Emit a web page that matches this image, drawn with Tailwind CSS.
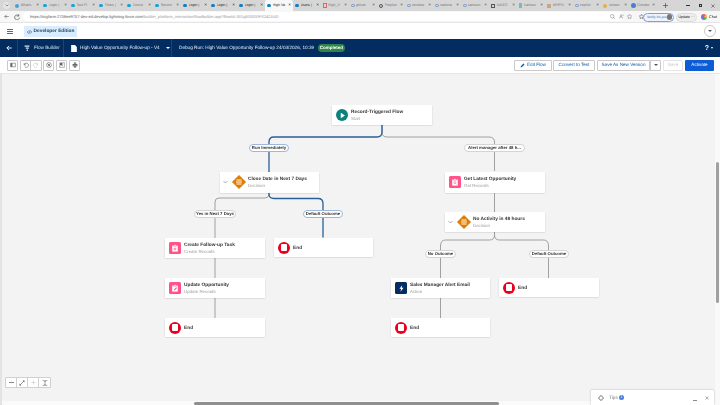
<!DOCTYPE html>
<html><head><meta charset="utf-8">
<script src="https://cdn.jsdelivr.net/npm/@tailwindcss/browser@4"></script>
</head>
<body class="w-[720px] h-[405px] overflow-hidden bg-white font-['Liberation_Sans',sans-serif] text-[#181818] [text-rendering:geometricPrecision]">
<div class="flex flex-col h-[405px] blur-[0.3px] whitespace-nowrap">
  <!-- tab strip -->
  <div class="h-[11px] bg-[#d6d6d6] flex items-center text-[3.6px] text-[#777] shrink-0">
    <div class="w-[13px] flex justify-center"><div class="w-[7px] h-[7px] rounded-full bg-[#e4e4e4] flex items-center justify-center"><svg width="4" height="3" viewBox="0 0 8 6"><path d="M1 1l3 3 3-3" fill="none" stroke="#555" stroke-width="1.200"/></svg></div></div>
    <div class="flex items-center gap-[1.500px] w-[28px] px-[2px]"><span class="w-[4px] h-[4px] rounded-full bg-[#4aa3d8] shrink-0"></span><span class="flex-1 overflow-hidden">What's</span><span class="text-[#444] text-[4.500px]">×</span></div>
    <div class="flex items-center gap-[1.500px] w-[28px] px-[2px]"><span class="w-[4px] h-[2.500px] rounded-full bg-[#17a0db] shrink-0"></span><span class="flex-1 overflow-hidden">Login |</span><span class="text-[#444] text-[4.500px]">×</span></div>
    <div class="flex items-center gap-[1.500px] w-[28px] px-[2px]"><span class="w-[4px] h-[2.500px] rounded-full bg-[#17a0db] shrink-0"></span><span class="flex-1 overflow-hidden">Test Fl</span><span class="text-[#444] text-[4.500px]">×</span></div>
    <div class="flex items-center gap-[1.500px] w-[28px] px-[2px]"><span class="w-[4px] h-[2.500px] rounded-full bg-[#17a0db] shrink-0"></span><span class="flex-1 overflow-hidden">Flows |</span><span class="text-[#444] text-[4.500px]">×</span></div>
    <div class="flex items-center gap-[1.500px] w-[28px] px-[2px]"><span class="w-[4px] h-[2.500px] rounded-full bg-[#17a0db] shrink-0"></span><span class="flex-1 overflow-hidden">Conne</span><span class="text-[#444] text-[4.500px]">×</span></div>
    <div class="flex items-center gap-[1.500px] w-[28px] px-[2px]"><span class="w-[4px] h-[2.500px] rounded-full bg-[#17a0db] shrink-0"></span><span class="flex-1 overflow-hidden">Recent</span><span class="text-[#444] text-[4.500px]">×</span></div>
    <div class="flex items-center gap-[1.500px] w-[28px] px-[2px] text-[#222]"><span class="w-[4px] h-[2.500px] rounded-full bg-[#0b7fc4] shrink-0"></span><span class="flex-1 overflow-hidden">Login |</span><span class="text-[4.500px]">×</span></div>
    <div class="flex items-center gap-[1.500px] w-[28px] px-[2px] text-[#222]"><span class="w-[4px] h-[2.500px] rounded-full bg-[#0b7fc4] shrink-0"></span><span class="flex-1 overflow-hidden">Login |</span><span class="text-[4.500px]">×</span></div>
    <div class="flex items-center gap-[1.500px] w-[28px] px-[2px] text-[#222]"><span class="w-[4px] h-[2.500px] rounded-full bg-[#0b7fc4] shrink-0"></span><span class="flex-1 overflow-hidden">Login |</span><span class="text-[4.500px]">×</span></div>
    <div class="flex items-center gap-[1.500px] w-[28px] px-[2px] h-full bg-[#f7f7f7] rounded-t-[2px] text-[#222]"><span class="w-[4px] h-[2.500px] rounded-full bg-[#0b7fc4] shrink-0"></span><span class="flex-1 overflow-hidden">High Va</span><span class="text-[4.500px]">×</span></div>
    <div class="flex items-center gap-[1.500px] w-[28px] px-[2px] text-[#222]"><span class="w-[4px] h-[2.500px] rounded-full bg-[#0b7fc4] shrink-0"></span><span class="flex-1 overflow-hidden">Users |</span><span class="text-[4.500px]">×</span></div>
    <div class="flex items-center gap-[1.500px] w-[28px] px-[2px]"><span class="w-[3.500px] h-[4.500px] border-[0.5px] border-[#d66] bg-[#f3cccc] shrink-0"></span><span class="flex-1 overflow-hidden">High_V</span><span class="text-[#444] text-[4.500px]">×</span></div>
    <div class="flex items-center gap-[1.500px] w-[28px] px-[2px]"><span class="w-[3.500px] h-[3.500px] rounded-full border-[0.5px] border-[#6a94c9] shrink-0"></span><span class="flex-1 overflow-hidden">github</span><span class="text-[#444] text-[4.500px]">×</span></div>
    <div class="flex items-center gap-[1.500px] w-[28px] px-[2px]"><span class="w-[4px] h-[4px] rounded-full border-[0.7px] border-[#555] shrink-0"></span><span class="flex-1 overflow-hidden">Perplex</span><span class="text-[#444] text-[4.500px]">×</span></div>
    <div class="flex items-center gap-[1.500px] w-[28px] px-[2px]"><span class="w-[3.500px] h-[3.500px] rounded-full border-[0.5px] border-[#6a94c9] shrink-0"></span><span class="flex-1 overflow-hidden">window</span><span class="text-[#444] text-[4.500px]">×</span></div>
    <div class="flex items-center gap-[1.500px] w-[28px] px-[2px]"><span class="w-[3.500px] h-[3.500px] rounded-full border-[0.5px] border-[#6a94c9] shrink-0"></span><span class="flex-1 overflow-hidden">nationa</span><span class="text-[#444] text-[4.500px]">×</span></div>
    <div class="flex items-center gap-[1.500px] w-[28px] px-[2px]"><span class="w-[3.500px] h-[3.500px] rounded-full border-[0.5px] border-[#6a94c9] shrink-0"></span><span class="flex-1 overflow-hidden">samsun</span><span class="text-[#444] text-[4.500px]">×</span></div>
    <div class="flex items-center gap-[1.500px] w-[28px] px-[2px]"><span class="w-[4px] h-[4px] border-[0.7px] border-[#555] shrink-0"></span><span class="flex-1 overflow-hidden">AA/ATI</span><span class="text-[#444] text-[4.500px]">×</span></div>
    <div class="flex items-center gap-[1.500px] w-[28px] px-[2px]"><span class="w-[3px] h-[5px] bg-[#7bb] shrink-0"></span><span class="flex-1 overflow-hidden">Samsur</span><span class="text-[#444] text-[4.500px]">×</span></div>
    <div class="flex items-center gap-[1.500px] w-[28px] px-[2px]"><span class="w-[4px] h-[4px] bg-[#c9a77a] shrink-0"></span><span class="flex-1 overflow-hidden">WHPO</span><span class="text-[#444] text-[4.500px]">×</span></div>
    <div class="flex items-center gap-[1.500px] w-[28px] px-[2px]"><span class="w-[3.500px] h-[3.500px] rounded-full border-[0.5px] border-[#6a94c9] shrink-0"></span><span class="flex-1 overflow-hidden">copilot</span><span class="text-[#444] text-[4.500px]">×</span></div>
    <div class="flex items-center gap-[1.500px] w-[28px] px-[2px]"><span class="w-[4px] h-[4px] rounded-full bg-[#e6b04c] shrink-0"></span><span class="flex-1 overflow-hidden">romani</span><span class="text-[#444] text-[4.500px]">×</span></div>
    <div class="flex items-center gap-[1.500px] w-[28px] px-[2px]"><span class="w-[4.500px] h-[4.500px] rounded-full bg-[#4a7fd0] shrink-0"></span><span class="flex-1 overflow-hidden">Climate</span><span class="text-[#444] text-[4.500px]">×</span></div>
    <svg class="ml-[6px]" width="5" height="5" viewBox="0 0 10 10"><path d="M5 0v10M0 5h10" stroke="#444" stroke-width="1.300"/></svg>
    <div class="ml-auto flex items-center gap-[9px] pr-[5px] text-[#333]">
      <span class="w-[3.500px] h-[0.7px] bg-[#333]"></span><span class="w-[3.500px] h-[3.500px] border-[0.7px] border-[#333]"></span><svg width="4" height="4" viewBox="0 0 10 10"><path d="M1 1l8 8M9 1l-8 8" stroke="#333" stroke-width="1.300"/></svg>
    </div>
  </div>
  <!-- address bar -->
  <div class="h-[12px] bg-[#f7f7f7] flex items-center shrink-0 text-[4px] border-b-[0.5px] border-[#e5e5e5]">
    <svg class="ml-[4px]" width="5" height="5" viewBox="0 0 10 10"><path d="M9.500 5H1.500M5 1.500 1.500 5 5 8.500" fill="none" stroke="#666" stroke-width="1.300"/></svg>
    <svg class="ml-[5px]" width="6" height="6" viewBox="0 0 10 10"><path d="M8 3A4 4 0 1 0 9 6" fill="none" stroke="#555" stroke-width="1.200"/><path d="M8 0v3.500H4.500" fill="none" stroke="#555" stroke-width="1"/></svg>
    <div class="ml-[3px] w-[600px] bg-white rounded-full h-[9px] flex items-center pl-[7px] pt-[0.5px] text-[#999]">
      <span class="text-[#555]">https://orgfarm-2708ee9757-dev-ed.develop.lightning.force.com</span><span>/builder_platform_interaction/flowBuilder.app?flowId=301g500000FX242AAD</span>
    </div>
    <div class="absolute left-[610px] top-[14px] flex items-center gap-[3.500px]">
      <svg width="5" height="5" viewBox="0 0 10 10"><circle cx="4.500" cy="4.500" r="3.500" fill="none" stroke="#777"/><path d="M7 7l3 3" stroke="#777"/></svg>
      <svg width="5" height="5" viewBox="0 0 10 10"><path d="M1 9 4 1l3 8M2 6h4M8 1v3" fill="none" stroke="#777"/></svg>
      <svg width="5" height="5" viewBox="0 0 10 10"><path d="M5 .5l1.400 3 3.200.4-2.400 2.200.7 3.300L5 7.800 2.100 9.400l.7-3.300L.4 3.900l3.200-.4z" fill="none" stroke="#777" stroke-width=".9"/></svg>
      <svg class="ml-[3px]" width="5" height="5" viewBox="0 0 10 10"><path d="M5 .5l1.400 3 3.200.4-2.400 2.200.7 3.300L5 7.800 2.100 9.400l.7-3.300L.4 3.900l3.200-.4z" fill="none" stroke="#555" stroke-width="1"/></svg>
    </div>
    <div class="absolute left-[643px] top-[12.500px] w-[31px] h-[9px] pl-[3px] pt-[0.5px] rounded-full border-[0.7px] border-[#7d9fe0] bg-[#eef3fd] text-[#3a62b0] flex items-center justify-between pr-[1px] text-[3.400px]">Verify it's you<span class="w-[5px] h-[6px] rounded-full bg-[#777]"></span></div>
    <div class="absolute left-[676px] top-[12.500px] w-[21px] h-[9px] pt-[0.5px] rounded-full bg-[#eeeeee] border-[0.5px] border-[#ddd] flex items-center justify-center text-[3.600px]">Update ⋯</div>
    <span class="absolute left-[701px] top-[14px] w-[6px] h-[6px] rounded-full bg-[conic-gradient(#e55,#fb3,#4b6,#48e,#a5d,#e55)]"></span>
    <span class="absolute left-[709px] top-[15px] text-[3.800px] leading-[5px]">Chat</span>
  </div>
  <!-- org header -->
  <div class="h-[16px] bg-white flex items-center shrink-0 relative">
    <div class="ml-[7px] w-[6px] flex flex-col gap-[1px]"><span class="h-[1px] bg-[#3f6fa8]"></span><span class="h-[1px] bg-[#3f6fa8]"></span><span class="h-[1px] bg-[#3f6fa8]"></span></div>
    <div class="ml-[11px] w-[53px] h-[11px] pt-[1px] bg-[#d8edff] flex items-center justify-center gap-[2px] text-[4.800px] font-bold text-[#2b3f55]"><svg width="5" height="4" viewBox="0 0 10 8"><path d="M3 1 .7 4 3 7M7 1l2.300 3L7 7M6 .5 4 7.500" fill="none" stroke="#333" stroke-width="1"/></svg>Developer Edition</div>
    <div class="ml-auto mr-[4px] w-[12px] h-[12px] rounded-full border-[0.7px] border-[#c9c9c9] flex items-center justify-center"><span class="w-0 h-0 border-x-[2px] border-x-transparent border-t-[2.500px] border-t-[#555]"></span></div>
  </div>
  <!-- navy bar -->
  <div class="h-[18px] bg-[#032d60] flex items-center text-white text-[4.700px] shrink-0">
    <div class="w-[18px] h-full flex items-center justify-center border-r-[0.5px] border-[#1b4577]">
      <svg width="6" height="6" viewBox="0 0 10 10"><path d="M9.500 5H1.500M5 1.500 1.500 5 5 8.500" fill="none" stroke="#fff" stroke-width="1.500"/></svg>
    </div>
    <div class="w-[46px] h-full flex items-center pl-[6px] gap-[4px] border-r-[0.5px] border-[#1b4577]">
      <svg width="6" height="6" viewBox="0 0 10 10"><path d="M1 1h8v2H1zM3 4.300h5v1.800H3zM4.500 7.400h2V10h-2z" fill="#dbe6f3"/></svg>
      <span class="text-[#dbe6f3]">Flow Builder</span>
    </div>
    <div class="w-[108px] h-full flex items-center pl-[7px] border-r-[0.5px] border-[#1b4577]">
      <svg class="shrink-0" width="6" height="7" viewBox="0 0 9 11"><path d="M0 0h6l3 3v8H0z" fill="#fff"/></svg>
      <span class="ml-[3px] text-[#e8eff7]">High Value Opportunity Follow-up - V4</span>
      <span class="ml-[6px] w-0 h-0 border-x-[2px] border-x-transparent border-t-[2.500px] border-t-white"></span>
    </div>
    <div class="pl-[7px] text-[#e8eff7]">Debug Run: High Value Opportunity Follow-up 24/03/2026, 10:39</div>
    <div class="absolute left-[318px] top-[44px] h-[8px] w-[27px] pt-[0.5px] rounded-full bg-[#2e844a] flex items-center justify-center font-bold text-[4.500px]">Completed</div>
    <div class="ml-auto mr-[7px] flex items-center gap-[2px]"><span class="text-[7px] font-bold leading-none">?</span><span class="w-0 h-0 border-x-[1.500px] border-x-transparent border-t-[2px] border-t-white"></span></div>
  </div>
  <!-- toolbar -->
  <div class="h-[17px] bg-white flex items-center shrink-0 border-b border-[#e5e5e5] relative">
    <div class="ml-[7px] w-[11px] h-[11px] rounded-[1px] border-[0.5px] border-[#c9c9c9] flex items-center justify-center">
      <svg width="6" height="6" viewBox="0 0 10 10"><path d="M1 2h8v6H1z" fill="none" stroke="#666"/><path d="M1 2h3v6H1z" fill="#666"/></svg>
    </div>
    <div class="ml-[2px] flex rounded-[1px] border-[0.5px] border-[#c9c9c9] h-[11px] w-[22px]">
      <div class="w-[11px] flex items-center justify-center border-r-[0.5px] border-[#c9c9c9]"><svg width="6" height="6" viewBox="0 0 10 10"><path d="M2 2v3h3M2 5a3.600 3.600 0 1 1 1 3" fill="none" stroke="#666" stroke-width="1"/></svg></div>
      <div class="w-[11px] flex items-center justify-center"><svg width="6" height="6" viewBox="0 0 10 10"><path d="M8 2v3H5M8 5a3.600 3.600 0 1 0-1 3" fill="none" stroke="#c9c9c9" stroke-width="1"/></svg></div>
    </div>
    <div class="ml-[1px] w-[11px] h-[11px] rounded-[1px] border-[0.5px] border-[#c9c9c9] flex items-center justify-center"><svg width="6" height="6" viewBox="0 0 10 10"><circle cx="5" cy="5" r="4" fill="none" stroke="#666" stroke-width="1"/><path d="M2.500 2.500l5 5" stroke="#666"/><circle cx="5" cy="5" r="1.600" fill="#666"/></svg></div>
    <div class="ml-[2px] w-[11px] h-[11px] rounded-[1px] border-[0.5px] border-[#c9c9c9] flex items-center justify-center"><svg width="6" height="6" viewBox="0 0 10 10"><path d="M1 1h4v4H1z" fill="#666"/><path d="M6 1h3v8H1V6h5z" fill="none" stroke="#666" stroke-width=".8"/></svg></div>
    <div class="ml-[2px] w-[11px] h-[11px] rounded-[1px] border-[0.5px] border-[#c9c9c9] flex items-center justify-center"><svg width="6" height="6" viewBox="0 0 10 10"><path d="M3 1h4v2H3zM1 3.500h8V7H7.500V5.500h-5V7H1zM3 6h4v3H3z" fill="#666"/></svg></div>
    <div class="ml-auto mr-[6px] flex items-center text-[4.600px]">
      <div class="w-[38px] h-[11px] pt-[0.5px] rounded-[1px] border-[0.5px] border-[#c9c9c9] flex items-center justify-center gap-[2px] text-[#0b5cab]"><svg width="5" height="5" viewBox="0 0 10 10"><path d="M1 9l1-3 5-5 2 2-5 5z" fill="#0b5cab"/></svg>Edit Flow</div>
      <div class="ml-[1px] w-[42px] h-[11px] pt-[0.5px] rounded-[1px] border-[0.5px] border-[#c9c9c9] flex items-center justify-center text-[#0b5cab]">Convert to Test</div>
      <div class="ml-[2px] w-[53px] h-[11px] pt-[0.5px] rounded-l-[1px] border-[0.5px] border-[#c9c9c9] flex items-center justify-center text-[#0b5cab]">Save As New Version</div>
      <div class="w-[11px] h-[11px] rounded-r-[1px] border-[0.5px] border-[#c9c9c9] flex items-center justify-center"><span class="w-0 h-0 border-x-[2px] border-x-transparent border-t-[2.500px] border-t-[#555]"></span></div>
      <div class="ml-[2px] w-[20px] h-[11px] pt-[0.5px] rounded-[1px] border-[0.5px] border-[#e5e5e5] flex items-center justify-center text-[#c9c9c9]">Save</div>
      <div class="ml-[2px] w-[29px] h-[11px] pt-[0.5px] rounded-[1px] bg-[#0b5cd5] flex items-center justify-center text-white">Activate</div>
    </div>
  </div>
  <!-- canvas -->
  <div class="relative flex-1 bg-[#f3f3f3] overflow-hidden border-l-[2px] border-[#e3e3e3]">
    <svg class="absolute left-[-2px] top-[-74px]" width="720" height="405" fill="none" stroke-width="1">
      <g stroke="#a0a0a0">
        <path d="M382 125v7q0 5 5 5h102q5.500 0 5.500 5v29"/>
        <path d="M269 192v2q0 4-4 4h-46q-4 0-4 4v36"/>
        <path d="M215 258v20M215 298v20"/>
        <path d="M494.500 192v20M494.500 232v3q0 5-5 5h-44q-5 0-5 6v32"/>
        <path d="M494.500 232v3q0 5 5 5h44q5 0 5 6v32"/>
        <path d="M440.500 298v20"/>
      </g>
      <g stroke="#2a6099" stroke-width="1.300">
        <path d="M382 125v7q0 5-5 5h-103q-5 0-5 5v30"/>
        <path d="M269 192v2q0 4.500 5 4.500h44q5 0 5 5v34"/>
      </g>
    </svg>
    <!-- labels -->
    <div class="absolute left-[247px] top-[70px] w-[40px] h-[8px] pt-[0.5px] rounded-full bg-white border-[0.5px] border-[#9db8d8] flex items-center justify-center text-[4.300px] font-bold text-[#333]">Run Immediately</div>
    <div class="absolute left-[462px] top-[70px] w-[61px] h-[8px] pt-[0.5px] rounded-full bg-white border-[0.5px] border-[#d4d4d4] flex items-center justify-center text-[4.300px] font-bold text-[#333]">Alert manager after 48 h...</div>
    <div class="absolute left-[192px] top-[136px] w-[42px] h-[8px] pt-[0.5px] rounded-full bg-white border-[0.5px] border-[#d4d4d4] flex items-center justify-center text-[4.300px] font-bold text-[#333]">Yes in Next 7 Days</div>
    <div class="absolute left-[301px] top-[136px] w-[40px] h-[8px] pt-[0.5px] rounded-full bg-white border-[0.5px] border-[#9db8d8] flex items-center justify-center text-[4.300px] font-bold text-[#333]">Default Outcome</div>
    <div class="absolute left-[423px] top-[176px] w-[31px] h-[8px] pt-[0.5px] rounded-full bg-white border-[0.5px] border-[#d4d4d4] flex items-center justify-center text-[4.300px] font-bold text-[#333]">No Outcome</div>
    <div class="absolute left-[527px] top-[176px] w-[40px] h-[8px] pt-[0.5px] rounded-full bg-white border-[0.5px] border-[#d4d4d4] flex items-center justify-center text-[4.300px] font-bold text-[#333]">Default Outcome</div>

    <!-- Record-Triggered -->
    <div class="absolute left-[330px] top-[31px] w-[100px] h-[20px] bg-white shadow-[0_0.5px_1.500px_rgba(0,0,0,0.2)] flex items-center pl-[4px]">
      <div class="w-[12px] h-[12px] rounded-full bg-[#0b827c] flex items-center justify-center"><svg width="7" height="7" viewBox="0 0 10 10"><path d="M2.500 1 8.500 5 2.500 9z" fill="#fff"/></svg></div>
      <div class="ml-[3px] pt-[1.500px] leading-[6.200px]"><div class="text-[4.800px] font-bold text-[#333]">Record-Triggered Flow</div><div class="text-[4.400px] text-[#999]">Start</div></div>
    </div>
    <!-- Close date -->
    <div class="absolute left-[218px] top-[97.500px] w-[99px] h-[21px] bg-white shadow-[0_0.5px_1.500px_rgba(0,0,0,0.2)] flex items-center pl-[3px]">
      <svg width="5" height="4" viewBox="0 0 10 8"><path d="M1 2l4 4 4-4" fill="none" stroke="#777" stroke-width="1.200"/></svg>
      <svg class="ml-[4px]" width="14" height="14" viewBox="0 0 14 14"><path d="M7 .5 13.500 7 7 13.500 .5 7z" fill="#dd7a01" stroke="#dd7a01" stroke-linejoin="round"/><path d="M4.500 5h5M4 7h6M4.500 9h5" stroke="#fff" stroke-width="1"/></svg>
      <div class="ml-[2px] pt-[1.500px] leading-[6.200px]"><div class="text-[4.800px] font-bold text-[#333]">Close Date in Next 7 Days</div><div class="text-[4.400px] text-[#999]">Decision</div></div>
    </div>
    <!-- Create follow up -->
    <div class="absolute left-[163px] top-[164px] w-[100px] h-[20px] bg-white shadow-[0_0.5px_1.500px_rgba(0,0,0,0.2)] flex items-center pl-[4px]">
      <div class="w-[12px] h-[12px] rounded-[1.500px] bg-[#ff538a] flex items-center justify-center"><svg width="8" height="8" viewBox="0 0 10 10"><path d="M1.500 2h7v7.500h-7z" fill="#fff"/><path d="M3.500 1h3v2h-3z" fill="#fff" stroke="#ff538a" stroke-width=".5"/><path d="M5 4.500v3.500M3.300 6.200h3.400" stroke="#ff538a" stroke-width=".9"/></svg></div>
      <div class="ml-[3px] pt-[1.500px] leading-[6.200px]"><div class="text-[4.800px] font-bold text-[#333]">Create Follow-up Task</div><div class="text-[4.400px] text-[#999]">Create Records</div></div>
    </div>
    <!-- End -->
    <div class="absolute left-[272px] top-[164px] w-[99px] h-[19px] bg-white shadow-[0_0.5px_1.500px_rgba(0,0,0,0.2)] flex items-center pl-[4px]">
      <div class="w-[12px] h-[12px] rounded-full bg-[#ea001e] flex items-center justify-center"><span class="w-[6.500px] h-[6.500px] rounded-[1px] bg-white"></span></div>
      <div class="ml-[3px] pt-[1.500px] text-[4.800px] font-bold text-[#333]">End</div>
    </div>
    <!-- Update -->
    <div class="absolute left-[163px] top-[204px] w-[100px] h-[20px] bg-white shadow-[0_0.5px_1.500px_rgba(0,0,0,0.2)] flex items-center pl-[4px]">
      <div class="w-[12px] h-[12px] rounded-[1.500px] bg-[#ff538a] flex items-center justify-center"><svg width="8" height="8" viewBox="0 0 10 10"><path d="M1.500 2h7v7.500h-7z" fill="#fff"/><path d="M3.500 1h3v2h-3z" fill="#fff" stroke="#ff538a" stroke-width=".5"/><path d="M3.500 8 4 6.500 6.500 4l1 1L5 7.500z" fill="#ff538a"/></svg></div>
      <div class="ml-[3px] pt-[1.500px] leading-[6.200px]"><div class="text-[4.800px] font-bold text-[#333]">Update Opportunity</div><div class="text-[4.400px] text-[#999]">Update Records</div></div>
    </div>
    <!-- End -->
    <div class="absolute left-[163px] top-[244px] w-[100px] h-[19px] bg-white shadow-[0_0.5px_1.500px_rgba(0,0,0,0.2)] flex items-center pl-[4px]">
      <div class="w-[12px] h-[12px] rounded-full bg-[#ea001e] flex items-center justify-center"><span class="w-[6.500px] h-[6.500px] rounded-[1px] bg-white"></span></div>
      <div class="ml-[3px] pt-[1.500px] text-[4.800px] font-bold text-[#333]">End</div>
    </div>
    <!-- Get Latest -->
    <div class="absolute left-[443px] top-[97.500px] w-[100px] h-[21px] bg-white shadow-[0_0.5px_1.500px_rgba(0,0,0,0.2)] flex items-center pl-[4px]">
      <div class="w-[12px] h-[12px] rounded-[1.500px] bg-[#ff538a] flex items-center justify-center"><svg width="8" height="8" viewBox="0 0 10 10"><path d="M1.500 2h7v7.500h-7z" fill="#fff"/><path d="M3.500 1h3v2h-3z" fill="#fff" stroke="#ff538a" stroke-width=".5"/><circle cx="4.800" cy="5.800" r="1.300" fill="none" stroke="#ff538a" stroke-width=".7"/><path d="M5.800 6.800l1 1" stroke="#ff538a" stroke-width=".7"/></svg></div>
      <div class="ml-[3px] pt-[1.500px] leading-[6.200px]"><div class="text-[4.800px] font-bold text-[#333]">Get Latest Opportunity</div><div class="text-[4.400px] text-[#999]">Get Records</div></div>
    </div>
    <!-- No activity -->
    <div class="absolute left-[443px] top-[138px] w-[100px] h-[20px] bg-white shadow-[0_0.5px_1.500px_rgba(0,0,0,0.2)] flex items-center pl-[3px]">
      <svg width="5" height="4" viewBox="0 0 10 8"><path d="M1 2l4 4 4-4" fill="none" stroke="#777" stroke-width="1.200"/></svg>
      <svg class="ml-[4px]" width="14" height="14" viewBox="0 0 14 14"><path d="M7 .5 13.500 7 7 13.500 .5 7z" fill="#dd7a01" stroke="#dd7a01" stroke-linejoin="round"/><path d="M4.500 5h5M4 7h6M4.500 9h5" stroke="#fff" stroke-width="1"/></svg>
      <div class="ml-[2px] pt-[1.500px] leading-[6.200px]"><div class="text-[4.800px] font-bold text-[#333]">No Activity in 48 hours</div><div class="text-[4.400px] text-[#999]">Decision</div></div>
    </div>
    <!-- Sales -->
    <div class="absolute left-[389px] top-[204px] w-[99px] h-[20px] bg-white shadow-[0_0.5px_1.500px_rgba(0,0,0,0.2)] flex items-center pl-[4px]">
      <div class="w-[12px] h-[12px] rounded-[1.500px] bg-[#032d60] flex items-center justify-center"><svg width="7" height="7" viewBox="0 0 10 10"><path d="M6 .5 2 5.500h2.500L3.500 9.500 8 4H5.300z" fill="#fff"/></svg></div>
      <div class="ml-[3px] pt-[1.500px] leading-[6.200px]"><div class="text-[4.800px] font-bold text-[#333]">Sales Manager Alert Email</div><div class="text-[4.400px] text-[#999]">Action</div></div>
    </div>
    <!-- End -->
    <div class="absolute left-[389px] top-[244px] w-[99px] h-[19px] bg-white shadow-[0_0.5px_1.500px_rgba(0,0,0,0.2)] flex items-center pl-[4px]">
      <div class="w-[12px] h-[12px] rounded-full bg-[#ea001e] flex items-center justify-center"><span class="w-[6.500px] h-[6.500px] rounded-[1px] bg-white"></span></div>
      <div class="ml-[3px] pt-[1.500px] text-[4.800px] font-bold text-[#333]">End</div>
    </div>
    <!-- End -->
    <div class="absolute left-[497px] top-[204px] w-[100px] h-[19px] bg-white shadow-[0_0.5px_1.500px_rgba(0,0,0,0.2)] flex items-center pl-[4px]">
      <div class="w-[12px] h-[12px] rounded-full bg-[#ea001e] flex items-center justify-center"><span class="w-[6.500px] h-[6.500px] rounded-[1px] bg-white"></span></div>
      <div class="ml-[3px] pt-[1.500px] text-[4.800px] font-bold text-[#333]">End</div>
    </div>

    <!-- zoom controls -->
    <div class="absolute left-[3px] top-[303px] flex rounded-[1px] border-[0.5px] border-[#d0d0d0] bg-white h-[11px]">
      <div class="w-[11px] flex items-center justify-center border-r-[0.5px] border-[#d0d0d0]"><span class="w-[5px] h-[0.8px] bg-[#888]"></span></div>
      <div class="w-[11px] flex items-center justify-center border-r-[0.5px] border-[#d0d0d0]"><svg width="6" height="6" viewBox="0 0 10 10"><path d="M1.500 8.500 8.500 1.500" stroke="#555" stroke-width="1"/><path d="M1 6v3h3zM6 1h3v3z" fill="#555"/></svg></div>
      <div class="w-[11px] flex items-center justify-center border-r-[0.5px] border-[#d0d0d0]"><svg width="5" height="5" viewBox="0 0 10 10"><path d="M5 1v8M1 5h8" stroke="#c9c9c9" stroke-width="1.200"/></svg></div>
      <div class="w-[11px] flex items-center justify-center"><svg width="6" height="6" viewBox="0 0 10 10"><path d="M1 1h8M1 9h8M5 2v6M3.500 3.500 5 2l1.500 1.500M3.500 6.500 5 8l1.500-1.500" stroke="#666" fill="none" stroke-width=".9"/></svg></div>
    </div>

    <!-- right scrollbar -->
    <div class="absolute right-0 top-0 bottom-0 w-[5px] bg-[#f9f9f9]"><div class="absolute left-[0.5px] top-[88px] w-[3px] h-[141px] bg-[#a0a0a0] rounded-full"></div></div>
    <!-- bottom scrollbar -->
    <div class="absolute left-0 right-0 bottom-0 h-[4px] bg-[#fafafa]"><div class="absolute left-[192px] top-[0.5px] w-[305px] h-[3px] bg-[#8f8f8f] rounded-full"></div></div>
    <!-- tips -->
    <div class="absolute left-[589px] top-[316px] w-[123px] h-[15px] bg-white rounded-t-[1px] shadow-[0_0_2px_rgba(0,0,0,0.3)] flex items-start pt-[5px] pl-[7px] text-[4.800px] text-[#777]">
      <svg width="6" height="6" viewBox="0 0 10 10"><circle cx="5" cy="5" r="3.500" fill="none" stroke="#666"/><path d="M5 0v2.500M5 7.500V10M0 5h2.500M7.500 5H10" stroke="#666"/></svg>
      <span class="ml-[5px]">Tips</span>
      <span class="ml-[1px] w-[5px] h-[5px] rounded-full bg-[#4a7de0] text-white text-[3.500px] flex items-center justify-center">1</span>
      <span class="ml-auto mr-[8px] mt-[5px] w-[4px] h-[0.7px] bg-[#888]"></span>
      <svg class="mr-[5px] mt-[1px]" width="4" height="4" viewBox="0 0 10 10"><path d="M1 1l8 8M9 1l-8 8" stroke="#666" stroke-width="1.300"/></svg>
    </div>
  </div>
</div>
</body></html>
